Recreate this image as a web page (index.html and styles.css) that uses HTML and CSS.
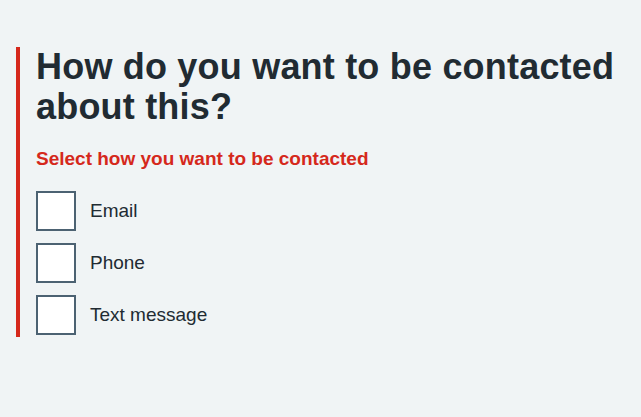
FILE: index.html
```html
<!DOCTYPE html>
<html lang="en">
<head>
<meta charset="utf-8">
<title>Contact preferences</title>
<link rel="stylesheet" href="styles.css">
</head>
<body>
<main class="page">
  <div class="form-group form-group--error">
    <fieldset class="fieldset">
      <legend class="legend">How do you want to be contacted about this?</legend>
      <span class="error-message">Select how you want to be contacted</span>
      <div class="checkboxes">
        <label class="checkbox-item"><input class="checkbox-input" type="checkbox"><span class="checkbox-box"></span><span class="checkbox-label">Email</span></label>
        <label class="checkbox-item"><input class="checkbox-input" type="checkbox"><span class="checkbox-box"></span><span class="checkbox-label">Phone</span></label>
        <label class="checkbox-item"><input class="checkbox-input" type="checkbox"><span class="checkbox-box"></span><span class="checkbox-label">Text message</span></label>
      </div>
    </fieldset>
  </div>
</main>
</body>
</html>
```
FILE: styles.css
```css
html, body {
  margin: 0;
  padding: 0;
  background: #f0f4f5;
}
body {
  font-family: "Liberation Sans", Arial, sans-serif;
  color: #212b32;
}
.page {
  padding: 47px 16px 0 16px;
}
.form-group--error {
  border-left: 4px solid #d5281b;
  padding-left: 16px;
  padding-bottom: 2px;
}
.fieldset {
  border: 0;
  margin: 0;
  padding: 0;
  min-width: 0;
}
.legend {
  padding: 0;
  font-size: 36px;
  font-weight: 700;
  line-height: 40px;
  letter-spacing: 0.2px;
  margin: 0 0 20px 0;
}
.error-message {
  display: block;
  color: #d5281b;
  font-size: 19px;
  font-weight: 700;
  line-height: 24px;
  margin-bottom: 20px;
}
.checkboxes {
  display: flex;
  flex-direction: column;
  gap: 12px;
}
.checkbox-item {
  display: flex;
  align-items: center;
  min-height: 40px;
  cursor: pointer;
}
.checkbox-input {
  position: absolute;
  opacity: 0;
  width: 0;
  height: 0;
  margin: 0;
}
.checkbox-box {
  box-sizing: border-box;
  width: 40px;
  height: 40px;
  flex: none;
  background: #ffffff;
  border: 2px solid #4c6272;
}
.checkbox-label {
  padding-left: 14px;
  font-size: 19px;
  line-height: 24px;
}
```
